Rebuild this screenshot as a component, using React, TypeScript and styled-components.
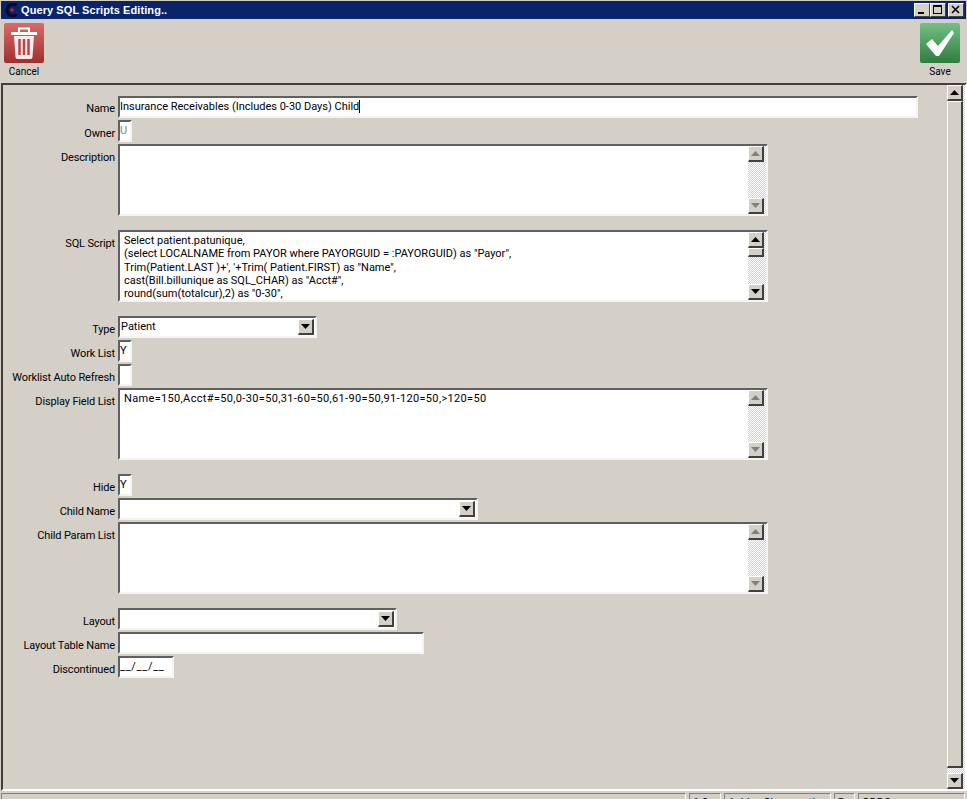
import React from "react";
import styled, { createGlobalStyle } from "styled-components";

const Global = createGlobalStyle`
  html, body { margin: 0; padding: 0; background: #d4d0c8; }
  #root { width: 967px; height: 799px; }
  * { box-sizing: border-box; }
`;

const Win = styled.div`
  width: 967px; height: 799px; overflow: hidden; background: #d4d0c8;
  display: flex; flex-direction: column; padding-top: 1px;
  font-family: Roboto, "Liberation Sans", Arial, sans-serif; font-size: 11px; color: #000;
`;
const TitleBar = styled.div`
  height: 18px; margin: 0 1px; flex: none; background: #0a246a; color: #fff;
  display: flex; align-items: center; padding: 0 2px 0 4px; gap: 2px;
  font-family: "Liberation Sans", Arial, sans-serif; font-weight: 700; font-size: 11px; letter-spacing: 0.08px;
`;
const TitleText = styled.span` flex: 1; `;
const WinBtns = styled.div` display: flex; `;
const WinBtn = styled.div<{ $gap?: boolean }>`
  width: 16px; height: 14px; background: #d4d0c8; margin-left: ${p => (p.$gap ? 2 : 0)}px;
  border: 1px solid; border-color: #fff #404040 #404040 #fff;
  display: flex; align-items: center; justify-content: center;
`;
const Toolbar = styled.div`
  height: 64px; flex: none; display: flex; justify-content: space-between; padding: 4px 7px 0 4px;
`;
const ToolBtn = styled.div`
  width: 40px; display: flex; flex-direction: column; align-items: center;
  font-size: 10px; line-height: 12px; gap: 3px;
`;
const ToolIcon = styled.div<{ $c1: string; $c2: string }>`
  width: 40px; height: 40px; flex: none; border-radius: 2px;
  background: linear-gradient(${p => p.$c1}, ${p => p.$c2});
  display: flex; align-items: center; justify-content: center;
`;
const Panel = styled.div`
  height: 708px; flex: none; margin: 0 0 0 1px; display: flex; justify-content: space-between;
  border: 2px solid; border-color: #404040 #fff #fff #404040;
`;
const Form = styled.div`
  display: flex; flex-direction: column; padding-top: 11px; width: 921px;
`;
const Row = styled.div<{ $after?: number }>`
  display: flex; gap: 3px; margin-bottom: ${p => p.$after ?? 2}px;
`;
const Label = styled.div<{ $top?: number }>`
  width: 112px; flex: none; text-align: right; padding-top: ${p => p.$top ?? 7}px; line-height: 13px;
  white-space: nowrap; letter-spacing: -0.15px;
`;
const Sunken = styled.div<{ $w: number; $h: number }>`
  width: ${p => p.$w}px; height: ${p => p.$h}px; flex: none; background: #fff;
  border: 2px solid; border-color: #606060 #f4f4f4 #f4f4f4 #606060;
  display: flex; overflow: hidden; line-height: 13px; padding: 2px 0;
`;
const Value = styled.span<{ $muted?: boolean; $track?: number }>`
  white-space: nowrap; color: ${p => (p.$muted ? "#808080" : "#000")}; font-size: 11px;
  letter-spacing: ${p => p.$track ?? 0}px;
`;
const Caret = styled.span`
  display: inline-block; width: 1px; height: 13px; background: #000; vertical-align: top;
`;
const Memo = styled(Sunken)` padding: 0; `;
const MemoText = styled.pre<{ $track?: number }>`
  flex: 1; margin: 0; padding: 2px 4px; font: inherit; font-size: 11px; line-height: 13.3px; overflow: hidden;
  letter-spacing: ${p => p.$track ?? 0}px;
`;
const VBar = styled.div`
  width: 18px; flex: none; display: flex; flex-direction: column;
  background: repeating-conic-gradient(#d4d0c8 0 25%, #fff 0 50%) 0 0 / 2px 2px;
`;
const SBtn = styled.div<{ $h?: number }>`
  width: 16px; height: ${p => p.$h ?? 16}px; flex: none; background: #d4d0c8;
  border: 1px solid; border-color: #fff #404040 #404040 #fff; border-width: 1px 2px 2px 1px;
  display: flex; align-items: center; justify-content: center;
`;
const Spacer = styled.div` flex: 1; `;
const Combo = styled(Sunken)` padding: 0 0 0 1px; align-items: flex-start; justify-content: space-between; `;
const ComboValue = styled(Value)` padding-top: 2px; `;
const DropBtn = styled(SBtn)` margin: 1px 1px 0 0; height: 16px; `;
const PageBar = styled(VBar)` height: 704px; `;
const PageThumb = styled.div`
  flex: 1; background: #d4d0c8; border: 1px solid; border-color: #fff #404040 #404040 #fff; border-width: 1px 2px 2px 1px;
  width: 16px;
`;
const Checks = styled.div` height: 5px; flex: none; `;
const Status = styled.div`
  height: 20px; flex: none; display: flex; gap: 3px; padding: 2px 2px 0 1px; font-size: 11px; line-height: 13px;
`;
const Cell = styled.div<{ $w?: number }>`
  ${p => (p.$w ? `width:${p.$w}px;flex:none;` : "flex:1;")}
  border: 1px solid; border-color: #808080 #fff #fff #808080; padding: 2px 3px; white-space: nowrap; overflow: hidden;
`;

const Tri = ({ up, off }: { up?: boolean; off?: boolean }) => (
  <svg width="9" height="5" viewBox="0 0 9 5">
    <polygon points={up ? "4.5,0 9,5 0,5" : "0,0 9,0 4.5,5"} fill={off ? "#808080" : "#000"} />
  </svg>
);

const MemoBox = ({ text, disabled, thumb, track }: { text: string; disabled?: boolean; thumb?: boolean; track?: number }) => (
  <Memo $w={650} $h={72}>
    <MemoText $track={track}>{text}</MemoText>
    <VBar>
      <SBtn><Tri up off={disabled} /></SBtn>
      {thumb && <SBtn $h={9} />}
      <Spacer />
      <SBtn><Tri off={disabled} /></SBtn>
    </VBar>
  </Memo>
);

const Field = ({ label, after, top, children }: { label: string; after?: number; top?: number; children: React.ReactNode }) => (
  <Row $after={after}>
    <Label $top={top}>{label}</Label>
    {children}
  </Row>
);

const sql = `Select patient.patunique,
(select LOCALNAME from PAYOR where PAYORGUID = :PAYORGUID) as "Payor",
Trim(Patient.LAST )+', '+Trim( Patient.FIRST) as "Name",
cast(Bill.billunique as SQL_CHAR) as "Acct#",
round(sum(totalcur),2) as "0-30",`;

export default function App() {
  return (
    <Win>
      <Global />
      <TitleBar>
        <svg width="14" height="14" viewBox="0 0 14 14">
          <path d="M11.500 2.500A5.800 5.800 0 1 0 11.500 11.500" fill="none" stroke="#05082a" strokeWidth="3.200" />
          <rect x="5.500" y="5.500" width="3" height="3" fill="#d81c28" />
        </svg>
        <TitleText>Query SQL Scripts Editing..</TitleText>
        <WinBtns>
          <WinBtn>
            <svg width="10" height="10" viewBox="0 0 10 10"><rect x="1" y="7" width="6" height="2" fill="#000" /></svg>
          </WinBtn>
          <WinBtn>
            <svg width="10" height="10" viewBox="0 0 10 10"><path d="M0 0h9v9H0z M1 2v6h7V2z" fill="#000" fillRule="evenodd" /></svg>
          </WinBtn>
          <WinBtn $gap>
            <svg width="10" height="10" viewBox="0 0 10 10"><path d="M1 1l7 7M8 1L1 8" stroke="#000" strokeWidth="1.6" /></svg>
          </WinBtn>
        </WinBtns>
      </TitleBar>
      <Toolbar>
        <ToolBtn>
          <ToolIcon $c1="#d96a6a" $c2="#a03030">
            <svg width="30" height="34" viewBox="0 0 30 34">
              <path d="M2 6h26v3H2z" fill="#fff" />
              <path d="M10 6V2.500h10V6" fill="none" stroke="#fff" strokeWidth="2" />
              <path d="M5 10h20l-1.500 21a2 2 0 0 1-2 2H8.500a2 2 0 0 1-2-2z" fill="#fbeaea" />
              <path d="M10.500 13v16M15 13v16M19.500 13v16" stroke="#b84646" strokeWidth="2.500" />
            </svg>
          </ToolIcon>
          Cancel
        </ToolBtn>
        <ToolBtn>
          <ToolIcon $c1="#74c084" $c2="#2e7d3e">
            <svg width="30" height="28" viewBox="0 0 30 28">
              <path d="M1 15l6-5 6 7L27 1l2 3-15 23h-3z" fill="#fff" />
            </svg>
          </ToolIcon>
          Save
        </ToolBtn>
      </Toolbar>
      <Panel>
        <Form>
          <Field label="Name" top={6}>
            <Sunken $w={800} $h={22}>
              <Value>Insurance Receivables (Includes 0-30 Days) Child<Caret /></Value>
            </Sunken>
          </Field>
          <Field label="Owner">
            <Sunken $w={14} $h={22}><Value $muted>U</Value></Sunken>
          </Field>
          <Field label="Description" after={14}>
            <MemoBox text="" disabled />
          </Field>
          <Field label="SQL Script" after={14}>
            <MemoBox text={sql} thumb />
          </Field>
          <Field label="Type">
            <Combo $w={199} $h={22}>
              <ComboValue>Patient</ComboValue>
              <DropBtn><Tri /></DropBtn>
            </Combo>
          </Field>
          <Field label="Work List">
            <Sunken $w={14} $h={22}><Value>Y</Value></Sunken>
          </Field>
          <Field label="Worklist Auto Refresh">
            <Sunken $w={14} $h={22} />
          </Field>
          <Field label="Display Field List" after={14}>
            <MemoBox text="Name=150,Acct#=50,0-30=50,31-60=50,61-90=50,91-120=50,>120=50" disabled track={0.34} />
          </Field>
          <Field label="Hide">
            <Sunken $w={14} $h={22}><Value>Y</Value></Sunken>
          </Field>
          <Field label="Child Name">
            <Combo $w={360} $h={22}>
              <ComboValue />
              <DropBtn><Tri /></DropBtn>
            </Combo>
          </Field>
          <Field label="Child Param List" after={14}>
            <MemoBox text="" disabled />
          </Field>
          <Field label="Layout">
            <Combo $w={279} $h={22}>
              <ComboValue />
              <DropBtn><Tri /></DropBtn>
            </Combo>
          </Field>
          <Field label="Layout Table Name">
            <Sunken $w={306} $h={22} />
          </Field>
          <Field label="Discontinued">
            <Sunken $w={56} $h={22}><Value $track={0.7}>__/__/__</Value></Sunken>
          </Field>
        </Form>
        <PageBar>
          <SBtn><Tri up /></SBtn>
          <PageThumb />
          <Checks />
          <SBtn><Tri /></SBtn>
        </PageBar>
      </Panel>
      <Status>
        <Cell />
        <Cell $w={32}>1.0</Cell>
        <Cell $w={107}>Ashley Chenoweth</Cell>
        <Cell $w={21}>D</Cell>
        <Cell $w={107}>ODBC</Cell>
      </Status>
    </Win>
  );
}
